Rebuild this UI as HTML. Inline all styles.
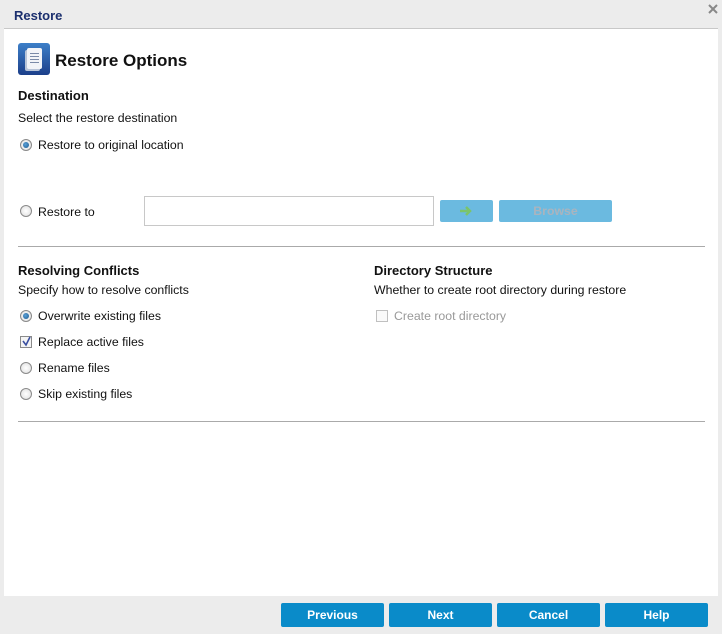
<!DOCTYPE html>
<html><head><meta charset="utf-8"><style>
*{box-sizing:border-box;margin:0;padding:0}
body{width:722px;height:634px;background:#ececec;font-family:"Liberation Sans",Arial,sans-serif;font-size:12.3px;color:#111;position:relative;overflow:hidden}
.abs{position:absolute}
.title{left:14px;top:8px;font-size:13px;color:#1b2f6e;font-weight:bold}
.panel{left:4px;top:28px;width:714px;height:568px;background:#fff;border-top:1px solid #c8c8c8}
.h{font-weight:bold;font-size:13px}
.t{margin-top:1px}
.radio{width:12px;height:12px;border-radius:50%;border:1px solid #8a8a8a;background:radial-gradient(circle,#fff,#ddd)}
.radio.on::after{content:"";position:absolute;left:2px;top:2px;width:6px;height:6px;border-radius:50%;background:radial-gradient(circle at 40% 40%,#5aa0d8,#1b5a8e)}
.chk{width:12px;height:12px;border:1px solid #8a8a8a;background:#f4f4f4}
.btn{top:603px;height:24px;width:103px;background:#0a8bc9;border-radius:2px;color:#fff;font-weight:bold;text-align:center;line-height:24px;font-size:12px}
hr{position:absolute;border:0;height:1px;background:#aaa}
</style></head><body>
<div class="abs title">Restore</div>
<svg class="abs" style="left:708px;top:4px" width="10" height="10"><path d="M1 1L9 9M9 1L1 9" stroke="#888" stroke-width="2"/></svg>
<div class="abs panel"></div>
<div class="abs" style="left:18px;top:43px;width:32px;height:32px;border-radius:3px;background:linear-gradient(#3d7fc8,#1c3f8a)">
<div class="abs" style="left:9px;top:5px;width:15px;height:21px;background:#f2f4f8;border-radius:2px;box-shadow:-2px 2px 0 #b8c4d8"></div>
<div class="abs" style="left:12px;top:10px;width:9px;height:11px;background:repeating-linear-gradient(#7a8aa8 0 1px,transparent 1px 3px)"></div>
</div>
<div class="abs" style="left:55px;top:51px;font-size:17px;font-weight:bold">Restore Options</div>
<div class="abs h" style="left:18px;top:88px">Destination</div>
<div class="abs" style="left:18px;top:111px">Select the restore destination</div>
<div class="abs radio on" style="left:20px;top:139px"></div>
<div class="abs" style="left:38px;top:138px">Restore to original location</div>
<div class="abs radio" style="left:20px;top:205px"></div>
<div class="abs" style="left:38px;top:205px">Restore to</div>
<div class="abs" style="left:144px;top:196px;width:290px;height:30px;border:1px solid #c8c8c8"></div>
<div class="abs" style="left:440px;top:200px;width:53px;height:22px;background:#6bbae0;border-radius:2px"></div>
<svg class="abs" style="left:458px;top:204px" width="16" height="14"><path d="M2 7H12M8 3L12 7L8 11" stroke="#7bc46a" stroke-width="2.5" fill="none"/></svg>
<div class="abs" style="left:499px;top:200px;width:113px;height:22px;background:#6bbae0;border-radius:2px;color:#aab4be;font-weight:bold;text-align:center;line-height:22px">Browse</div>
<hr style="left:18px;top:246px;width:687px">
<div class="abs h" style="left:18px;top:263px">Resolving Conflicts</div>
<div class="abs" style="left:18px;top:283px">Specify how to resolve conflicts</div>
<div class="abs radio on" style="left:20px;top:310px"></div>
<div class="abs" style="left:38px;top:309px">Overwrite existing files</div>
<div class="abs chk" style="left:20px;top:336px"></div>
<svg class="abs" style="left:21px;top:336px" width="11" height="11"><path d="M2 5L5 9L9 1" stroke="#3a4fa0" stroke-width="1.6" fill="none"/></svg>
<div class="abs" style="left:38px;top:335px">Replace active files</div>
<div class="abs radio" style="left:20px;top:362px"></div>
<div class="abs" style="left:38px;top:361px">Rename files</div>
<div class="abs radio" style="left:20px;top:388px"></div>
<div class="abs" style="left:38px;top:387px">Skip existing files</div>
<div class="abs h" style="left:374px;top:263px">Directory Structure</div>
<div class="abs" style="left:374px;top:283px">Whether to create root directory during restore</div>
<div class="abs chk" style="left:376px;top:310px;border-color:#c0c0c0;background:#fafafa"></div>
<div class="abs" style="left:394px;top:309px;color:#999">Create root directory</div>
<hr style="left:18px;top:421px;width:687px">
<div class="abs btn" style="left:281px">Previous</div>
<div class="abs btn" style="left:389px">Next</div>
<div class="abs btn" style="left:497px">Cancel</div>
<div class="abs btn" style="left:605px">Help</div>
</body></html>
